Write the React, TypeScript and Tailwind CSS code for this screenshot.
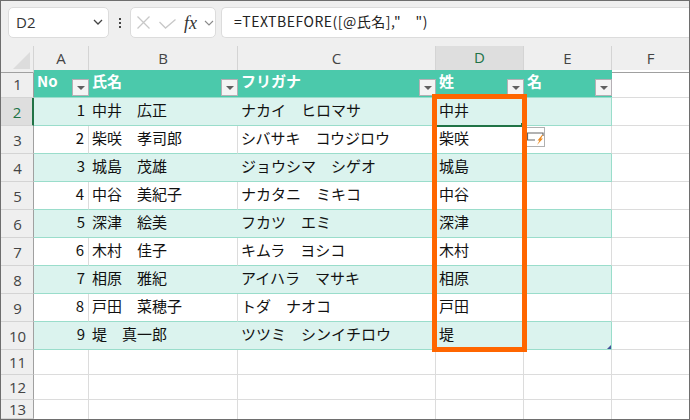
import React from "react";

const rows = [
  ["1", "中井　広正", "ナカイ　ヒロマサ", "中井"],
  ["2", "柴咲　孝司郎", "シバサキ　コウジロウ", "柴咲"],
  ["3", "城島　茂雄", "ジョウシマ　シゲオ", "城島"],
  ["4", "中谷　美紀子", "ナカタニ　ミキコ", "中谷"],
  ["5", "深津　絵美", "フカツ　エミ", "深津"],
  ["6", "木村　佳子", "キムラ　ヨシコ", "木村"],
  ["7", "相原　雅紀", "アイハラ　マサキ", "相原"],
  ["8", "戸田　菜穂子", "トダ　ナオコ", "戸田"],
  ["9", "堤　真一郎", "ツツミ　シンイチロウ", "堤"],
];

const font = { fontFamily: '"Noto Sans CJK JP", sans-serif' };
const latin = { fontFamily: '"Open Sans", sans-serif' };
const gridCols = "grid grid-cols-[33px_55px_149px_198px_88px_88px_1fr]";

function Filter() {
  return (
    <div className="absolute right-0 bottom-[1px] flex h-[17px] w-[17px] items-center justify-center border border-[#b5b0b5] bg-[#f4f4f4]">
      <div className="h-0 w-0 border-x-[4px] border-t-[4px] border-x-transparent border-t-[#606060]" />
    </div>
  );
}

function ColHead({ label, active, last }: { label: string; active?: boolean; last?: boolean }) {
  return (
    <div
      className={`flex items-center justify-center pb-[2px] text-[15px] ${
        active ? "border-b-[2px] border-b-[#217346] bg-[#dedede] text-[#217346]" : "border-b border-b-[#a0a0a0] text-[#444]"
      } ${last ? "" : "border-r border-r-[#d4d4d4]"}`}
      style={latin}
    >
      {label}
    </div>
  );
}

function RowHead({ n, active, h }: { n: number; active?: boolean; h: string }) {
  return (
    <div
      className={`flex items-center justify-center pl-[1px] pt-[1px] text-[15px] leading-none ${h} ${
        active ? "border-r-[2px] border-r-[#217346] bg-[#dedede] text-[#217346]" : "border-r border-r-[#a0a0a0] bg-[#efefef] text-[#444]"
      } border-b border-b-[#d4d4d4]`}
      style={latin}
    >
      {n}
    </div>
  );
}

function HeaderCell({ label }: { label: string }) {
  return (
    <div className="relative h-[28px] overflow-hidden border-b border-b-[#9addcb] bg-[#4bc9ab] pl-[3px] text-[15px] font-bold leading-[22px] text-white">
      {label}
      <Filter />
    </div>
  );
}

function Cell({ children, band, className }: { children?: React.ReactNode; band: boolean; className?: string }) {
  return (
    <div
      className={`flex h-[28px] items-center overflow-hidden border-b border-b-[#9addcb] pb-[3px] text-[15px] text-[#111] ${
        band ? "bg-[#dbf3ee]" : "border-r border-r-[#dcdcdc] bg-white"
      } ${className ?? ""}`}
    >
      {children}
    </div>
  );
}

export default function App() {
  return (
    <div className="relative h-[420px] w-[690px] overflow-hidden border border-[#6e6e6e] bg-white" style={font}>
      {/* Formula bar */}
      <div className="flex h-[45px] items-start bg-[#efefef] pl-[7px] pt-[6px]">
        <div className="flex h-[31px] w-[101px] items-center justify-between rounded-[5px] border border-[#dcdcdc] bg-white pl-[7px] pr-[5px] text-[15px] text-[#333]" style={latin}>
          D2
          <svg width="10" height="7" viewBox="0 0 10 7" fill="none" stroke="#444" strokeWidth="1.3"><path d="M1 1l4 4 4-4" /></svg>
        </div>
        <div className="mx-[6px] flex h-[31px] w-[9px] flex-col items-center justify-center gap-[2px]">
          <div className="h-[2px] w-[2px] bg-[#444]" />
          <div className="h-[2px] w-[2px] bg-[#444]" />
          <div className="h-[2px] w-[2px] bg-[#444]" />
        </div>
        <div className="flex h-[31px] w-[86px] items-center rounded-[5px] border border-[#dcdcdc] bg-white pl-[6px]">
          <svg width="13" height="13" viewBox="0 0 13 13" fill="none" stroke="#c8c8c8" strokeWidth="1.3"><path d="M.5.5l12 12M12.5.5l-12 12" /></svg>
          <svg className="ml-[9px] mt-[2px]" width="17" height="10" viewBox="0 0 17 10" fill="none" stroke="#c8c8c8" strokeWidth="1.3"><path d="M.5 3l6 6L16.5.5" /></svg>
          <span className="ml-[8px] w-[15px] text-[18px] font-normal italic leading-none text-[#333]" style={{ fontFamily: '"Liberation Serif", serif' }}>fx</span>
          <svg className="ml-[5px] mt-[1px]" width="10" height="6" viewBox="0 0 10 6" fill="none" stroke="#8a8a8a" strokeWidth="1.1"><path d="M1 1l4 4 4-4" /></svg>
        </div>
        <div className="ml-[5px] flex h-[31px] flex-1 items-center rounded-l-[5px] border-y border-l border-[#dcdcdc] bg-white pb-[2px] pl-[12px] text-[14px] tracking-[0.5px] text-[#222]">
          =TEXTBEFORE([@氏名],"　")
        </div>
      </div>

      {/* Sheet */}
      <div className="relative">
        <div className={`${gridCols} h-[24px] bg-[#efefef]`}>
          <div className="relative border-r border-b border-r-[#d4d4d4] border-b-[#a0a0a0]">
            <div className="absolute right-[3px] bottom-[3px] h-0 w-0 border-b-[17px] border-l-[17px] border-b-[#dcdcdc] border-l-transparent" />
          </div>
          <ColHead label="A" />
          <ColHead label="B" />
          <ColHead label="C" />
          <ColHead label="D" active />
          <ColHead label="E" />
          <ColHead label="F" last />
        </div>

        <div className={gridCols}>
          <RowHead n={1} h="h-[28px]" />
          <HeaderCell label="No" />
          <HeaderCell label="氏名" />
          <HeaderCell label="フリガナ" />
          <HeaderCell label="姓" />
          <HeaderCell label="名" />
          <div className="h-[28px] border-b border-b-[#dcdcdc]" />

          {rows.map((r, i) => {
            const band = i % 2 === 0;
            return (
              <React.Fragment key={r[0]}>
                <RowHead n={i + 2} active={i === 0} h="h-[28px]" />
                <Cell band={band} className="justify-end pr-[4px]">{r[0]}</Cell>
                <Cell band={band} className="whitespace-pre pl-[3px]">{r[1]}</Cell>
                <Cell band={band} className="whitespace-pre pl-[3px]">{r[2]}</Cell>
                <Cell band={band} className="pl-[3px]">{r[3]}</Cell>
                <Cell band={band} className="border-r border-r-[#9addcb]" />
                <div className="h-[28px] border-b border-b-[#dcdcdc]" />
              </React.Fragment>
            );
          })}

          {[11, 12].map((n) => (
            <React.Fragment key={n}>
              <RowHead n={n} h="h-[25px]" />
              {[0, 1, 2, 3, 4].map((c) => (
                <div key={c} className="h-[25px] border-r border-b border-r-[#dcdcdc] border-b-[#dcdcdc]" />
              ))}
              <div className="h-[25px] border-b border-b-[#dcdcdc]" />
            </React.Fragment>
          ))}
          <RowHead n={13} h="h-[19px]" />
          {[0, 1, 2, 3, 4].map((c) => (
            <div key={c} className="h-[19px] border-r border-r-[#dcdcdc]" />
          ))}
          <div className="h-[19px]" />
        </div>

        {/* Selection + overlays */}
        <div className="absolute left-[436px] top-[79px] h-[2px] w-[84px] bg-[#217346]" />
        <div className="absolute left-[520px] top-[77px] h-[4px] w-[2px] bg-[#217346]" />
        <div className="absolute left-[524px] top-[81px] flex h-[20px] w-[20px] items-center justify-center border border-[#b0b0b0] bg-white">
          <svg width="18" height="18" viewBox="0 0 18 18" fill="none">
            <path d="M1 5h16v3M1.500 5v7h7.500" stroke="#666" strokeWidth="1.2" />
            <path d="M16 7l-4.500 5.500h2L11 17l6-6.500h-2l2-3.500z" fill="#ed8b21" />
          </svg>
        </div>
        <div className="absolute left-[431px] top-[48px] h-[258px] w-[95px] border-[5px] border-[#ff6600]" />
        <div className="absolute left-[606px] top-[299px] h-0 w-0 border-b-[4px] border-l-[4px] border-b-[#44549a] border-l-transparent" />
      </div>
    </div>
  );
}
